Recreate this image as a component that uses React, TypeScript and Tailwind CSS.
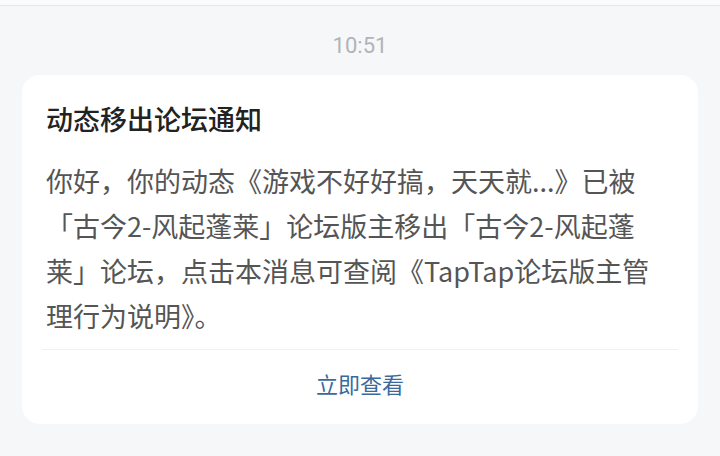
import React from 'react';

const lines = [
  '你好，你的动态《游戏不好好搞，天天就...》已被',
  '「古今2-风起蓬莱」论坛版主移出「古今2-风起蓬',
  '莱」论坛，点击本消息可查阅《TapTap论坛版主管',
  '理行为说明》。',
];

export default function App() {
  return (
    <div
      className="w-[720px] h-[456px] bg-[#f6f7f9] overflow-hidden"
      style={{ fontFamily: '"Noto Sans CJK SC", "Noto Sans", sans-serif' }}
    >
      <div className="h-[6px] bg-[#fafbfc] border-b border-[#e6e7ea]" />
      <div
        className="pt-[26px] text-center text-[22px] leading-[28px] text-[#b0b3b8]"
        style={{ fontFamily: 'Roboto, "Noto Sans", sans-serif' }}
      >
        10:51
      </div>
      <div className="mx-[22px] w-[676px] mt-[15px] bg-white rounded-[18px] px-[24px] pt-[24px]">
        <div className="text-[27px] leading-[40px] font-medium text-[#222]">动态移出论坛通知</div>
        <div className="mt-[19px] text-[27px] leading-[45px] text-[#555]">
          {lines.map(l => (
            <div key={l} className="whitespace-nowrap">{l}</div>
          ))}
        </div>
        <div className="mt-[11px] -mx-[4px] border-t border-[#f0f1f3]" />
        <div className="h-[74px] pt-[18px] text-center text-[22px] leading-[30px] text-[#3a6a9b]">立即查看</div>
      </div>
    </div>
  );
}
